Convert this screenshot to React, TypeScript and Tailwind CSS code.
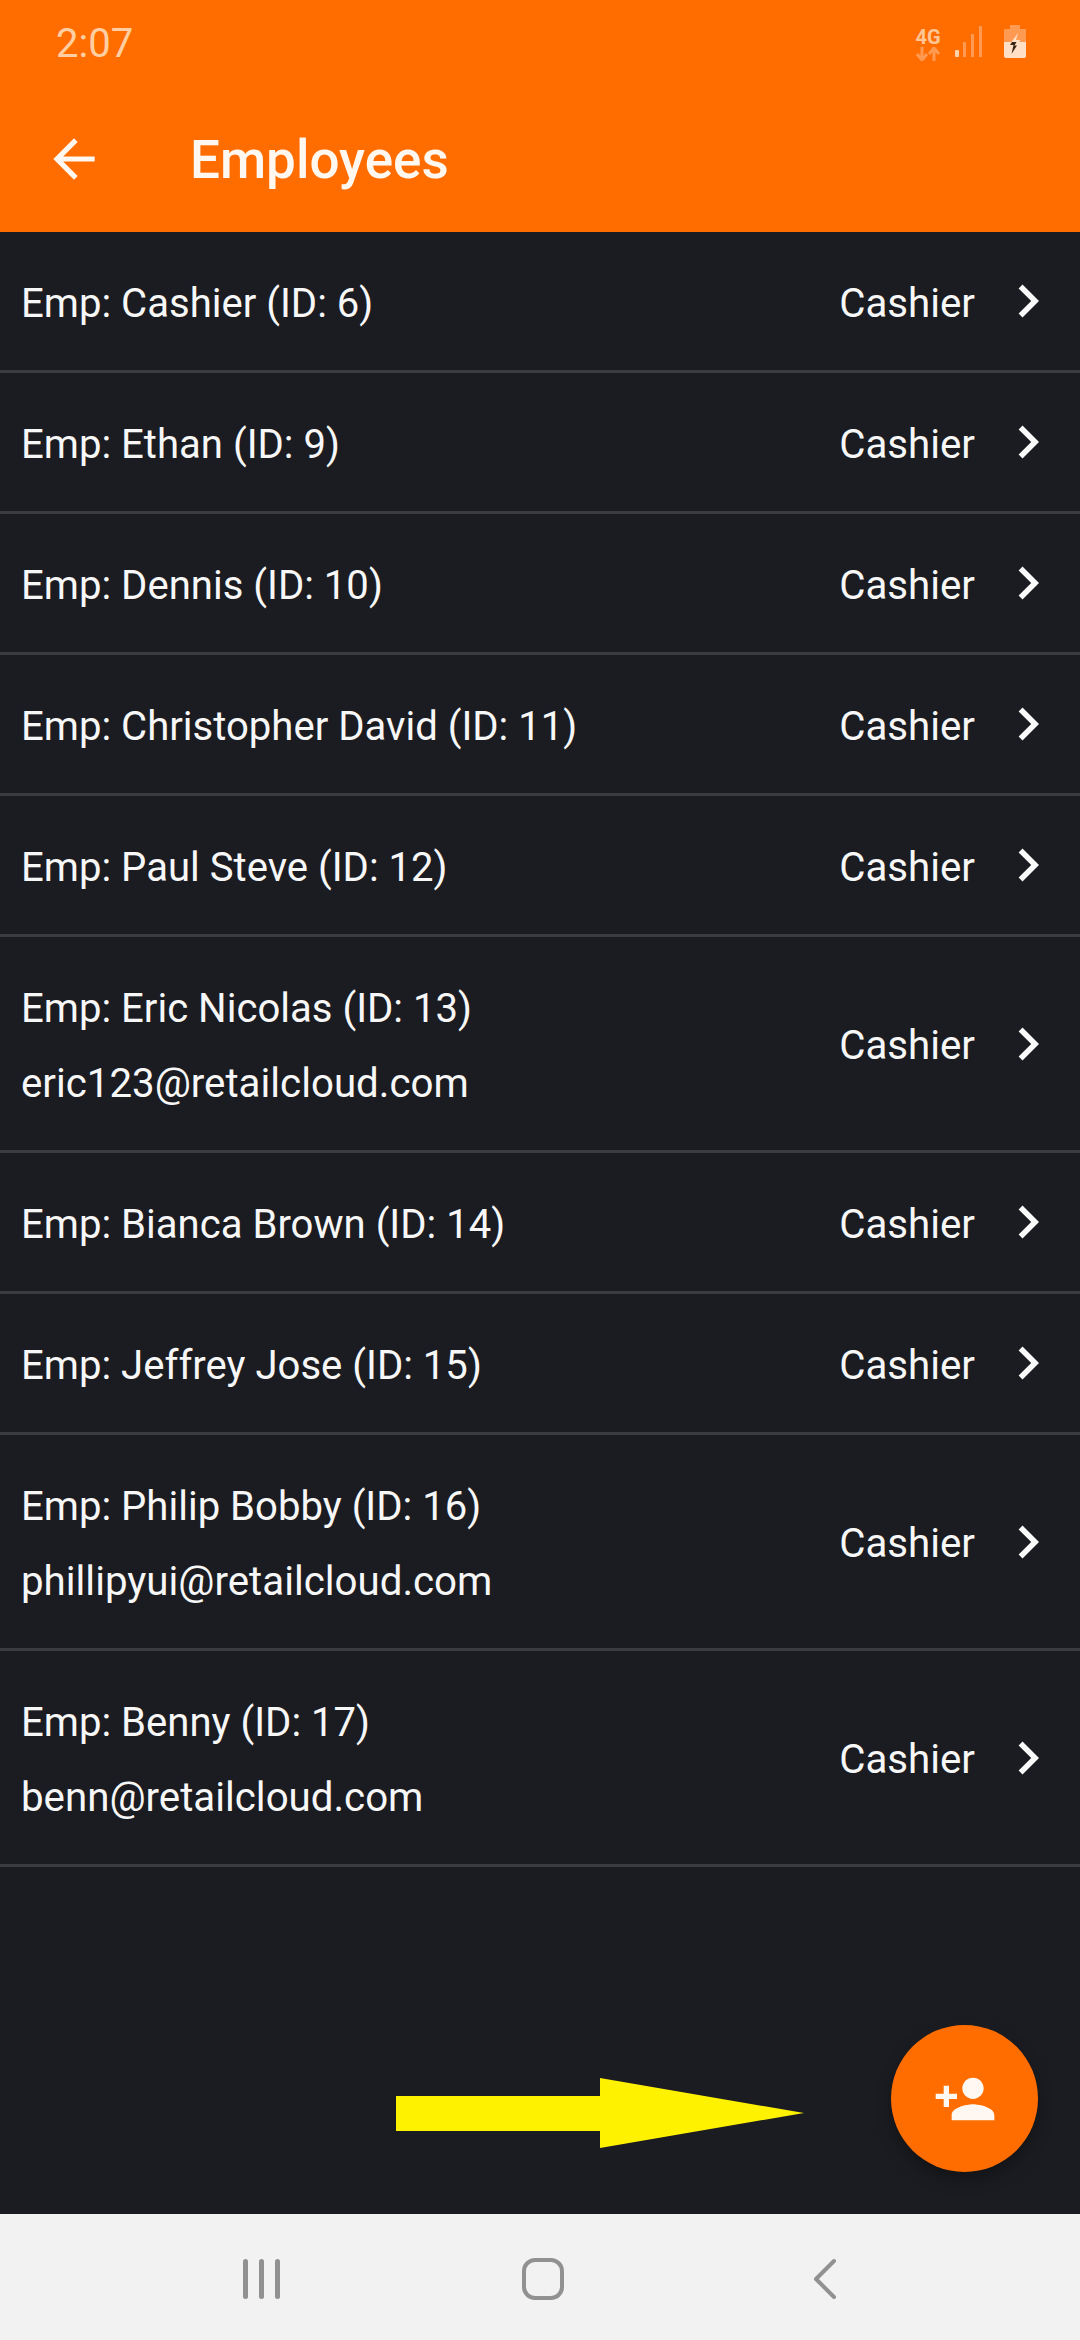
const employees = [
  { name: "Emp: Cashier (ID: 6)" },
  { name: "Emp: Ethan (ID: 9)" },
  { name: "Emp: Dennis (ID: 10)" },
  { name: "Emp: Christopher David (ID: 11)" },
  { name: "Emp: Paul Steve (ID: 12)" },
  { name: "Emp: Eric Nicolas (ID: 13)", email: "eric123@retailcloud.com" },
  { name: "Emp: Bianca Brown (ID: 14)" },
  { name: "Emp: Jeffrey Jose (ID: 15)" },
  { name: "Emp: Philip Bobby (ID: 16)", email: "phillipyui@retailcloud.com" },
  { name: "Emp: Benny (ID: 17)", email: "benn@retailcloud.com" },
];

const StatusIcons = () => (
  <div className="flex items-start">
    <div className="flex w-[24px] flex-col items-center text-[#ffc697]">
      <span className="text-[20px] leading-[20px] font-bold">4G</span>
      <svg width="24" height="14" viewBox="0 0 24 14" fill="none" stroke="#ff9a52" strokeWidth="3">
        <path d="M6 0v12M1 7l5 6 5-6" />
        <path d="M18 14V2M13 7l5-6 5 6" />
      </svg>
    </div>
    <svg width="28" height="31" viewBox="0 0 28 31" className="ml-[15px] mt-[-1px]">
      <rect x="0" y="24" width="4" height="7" rx="1" fill="#ffd2ab" />
      <rect x="8" y="16" width="3" height="15" fill="#ff9a52" />
      <rect x="16" y="8" width="3" height="23" fill="#ff9a52" />
      <rect x="24" y="0" width="3" height="31" fill="#ff9a52" />
    </svg>
    <svg width="22" height="33" viewBox="0 0 22 33" className="ml-[21px] mt-[-2px]">
      <rect x="6" y="0" width="10" height="4" fill="#ff9a52" />
      <rect x="0" y="4" width="22" height="13" fill="#ff9a52" />
      <path d="M0 17h22v14a2 2 0 0 1-2 2H2a2 2 0 0 1-2-2z" fill="#ffe0c6" />
      <path d="M14 8l-8 11h4.5l-3 10 9-14h-4.5l2-7z" fill="#ffe0c6" />
      <path d="M12.5 17l-2 3.5h2.5l-5.5 8.5 2-9h-3.5l2-3z" fill="#3a2414" />
    </svg>
  </div>
);

const Chevron = () => (
  <svg width="66" height="66" viewBox="0 0 24 24" fill="#fafafa" className="shrink-0">
    <path d="M10 6L8.59 7.41 13.17 12l-4.58 4.59L10 18l6-6z" />
  </svg>
);

const EmployeeRow = ({ name, email }: { name: string; email?: string }) => (
  <div className={`flex items-center border-b-[3px] border-[#3b3c41] pl-[21px] pr-[19px] ${email ? "h-[216px]" : "h-[141px]"}`}>
    <div className="flex-1 pt-[4px] leading-[75px] text-[#f7f7f7]">
      <div className="text-[40.1px]">{name}</div>
      {email && <div className="text-[40.25px]">{email}</div>}
    </div>
    <span className="mr-[20px] pt-[4px] text-[40.25px] leading-[75px] text-[#f7f7f7]">Cashier</span>
    <Chevron />
  </div>
);

export default function App() {
  return (
    <div className="flex h-[2340px] w-[1080px] flex-col overflow-hidden bg-[#1b1c21] font-['Roboto',sans-serif]">
      <header className="h-[232px] shrink-0 bg-[#ff6d00]">
        <div className="flex h-[88px] items-center justify-between pl-[56px] pr-[54px]">
          <span className="text-[40px] leading-none text-[#ffcfa3]">2:07</span>
          <StatusIcons />
        </div>
        <div className="flex h-[144px] items-center pl-[43px] pb-[2px]">
          <svg width="62" height="62" viewBox="0 0 24 24" fill="#fff8f0" className="shrink-0">
            <path d="M20 11H7.83l5.59-5.59L12 4l-8 8 8 8 1.41-1.41L7.83 13H20v-2z" />
          </svg>
          <h1 className="ml-[85px] pt-[2px] text-[53px] leading-none font-medium text-[#fff8f0]">Employees</h1>
        </div>
      </header>

      <main className="relative flex-1">
        {employees.map((e) => (
          <EmployeeRow key={e.name} name={e.name} email={e.email} />
        ))}

        {/* yellow annotation arrow */}
        <svg width="408" height="70" viewBox="0 0 408 70" className="absolute left-[396px] bottom-[66px]">
          <polygon points="0,18 204,18 204,0 408,35 204,70 204,53 0,53" fill="#fff200" />
        </svg>

        <button className="absolute right-[42px] bottom-[42px] flex h-[147px] w-[147px] items-center justify-center rounded-full bg-[#ff6d00] shadow-[0_8px_16px_rgba(0,0,0,0.3)]">
          <svg width="64" height="64" viewBox="0 0 24 24" fill="#fff8f2">
            <path d="M15 12c2.21 0 4-1.79 4-4s-1.79-4-4-4-4 1.79-4 4 1.79 4 4 4zm-9-2V7H4v3H1v2h3v3h2v-3h3v-2H6zm9 4c-2.67 0-8 1.34-8 4v2h16v-2c0-2.66-5.33-4-8-4z" />
          </svg>
        </button>
      </main>

      <nav className="flex h-[126px] shrink-0 items-center bg-[#f2f2f2] pt-[4px]">
        <div className="ml-[243px] flex h-[40px] w-[37px] justify-between">
          <div className="w-[5px] rounded-full bg-[#919191]" />
          <div className="w-[5px] rounded-full bg-[#919191]" />
          <div className="w-[5px] rounded-full bg-[#919191]" />
        </div>
        <div className="ml-[242px] h-[42px] w-[42px] rounded-[13px] border-[4px] border-[#919191]" />
        <svg width="24" height="42" viewBox="0 0 24 42" fill="none" stroke="#919191" strokeWidth="4" strokeLinecap="round" strokeLinejoin="round" className="ml-[249px]">
          <path d="M21 3L3 21l18 18" />
        </svg>
      </nav>
    </div>
  );
}
